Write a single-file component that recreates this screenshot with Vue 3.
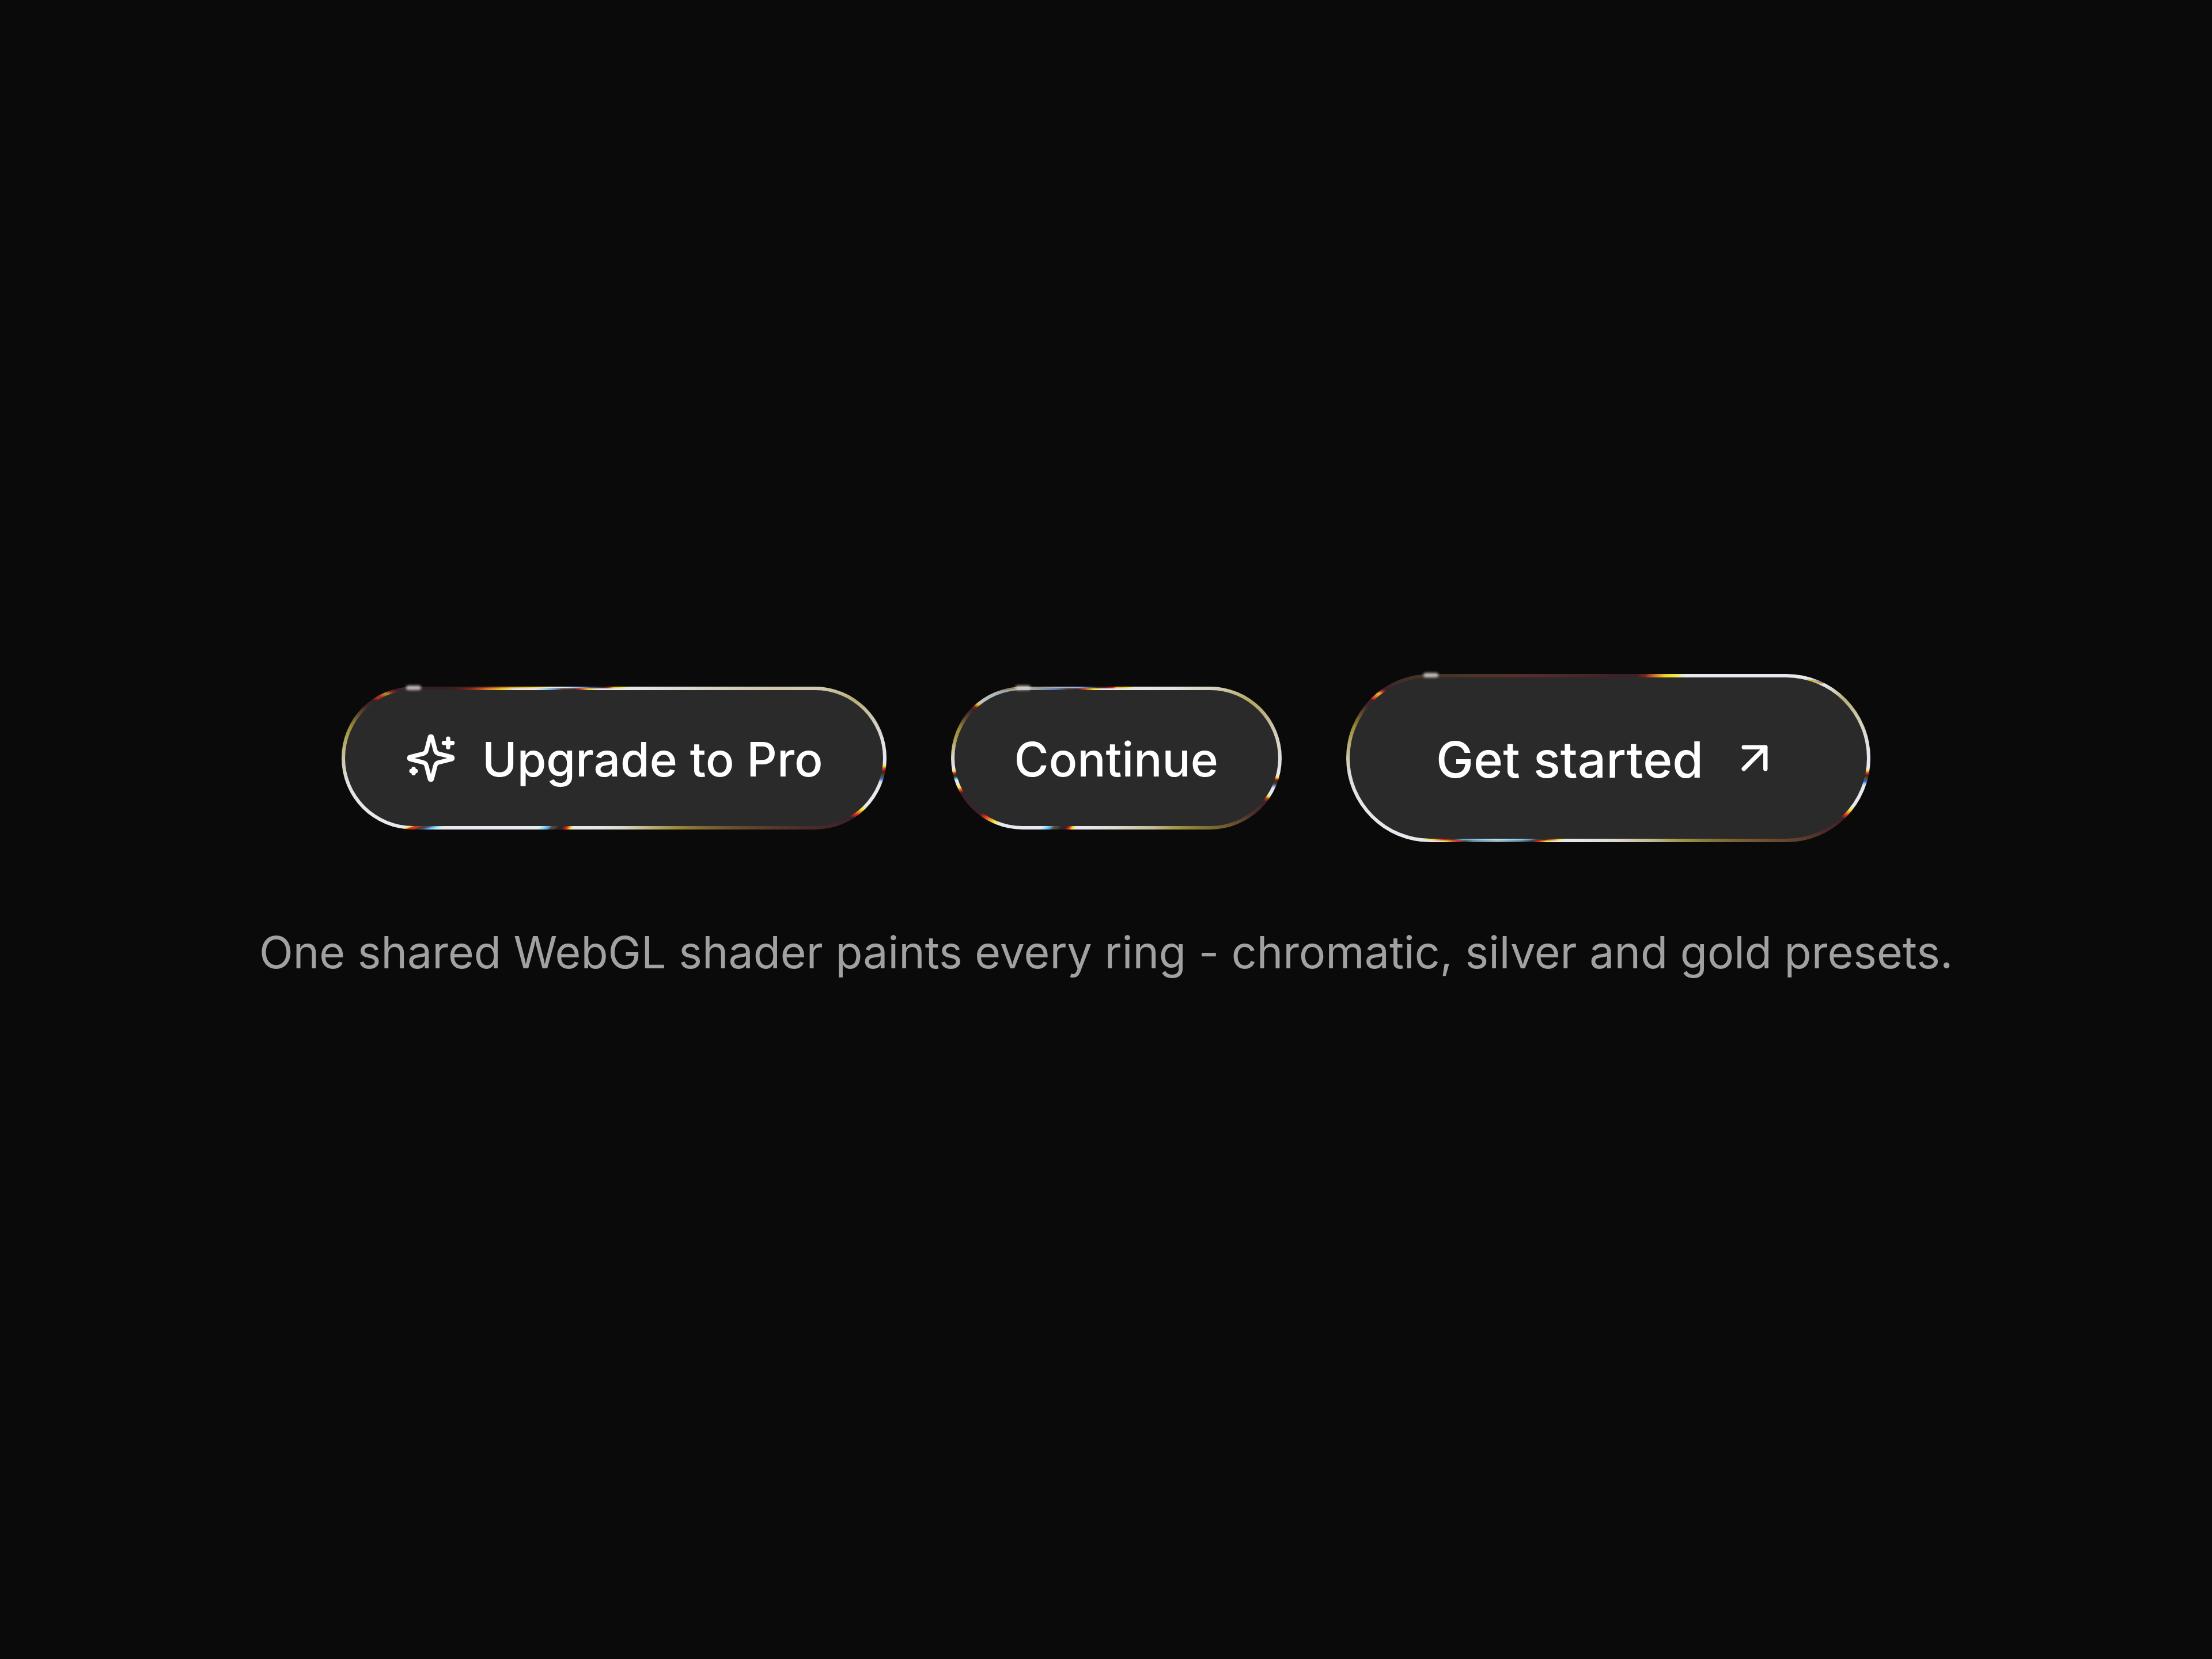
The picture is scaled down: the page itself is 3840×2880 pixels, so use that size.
<script setup>
const W = '#e9e8ee'
const YELLOW = '#eee832'
const RED = '#e02a24'
const PLUM = '#3a2228'
const OLIVE = '#9a8c38'
const MOSS = '#3a5030'
const CYAN = '#74e4ee'
const BLUE = '#6898e8'

// Ring colours are sampled as [x, y, colour] round the pill and projected on a conic sweep.
function sweep(w, h, points) {
  const stops = points
    .map(([x, y, colour]) => {
      const deg = (Math.atan2(x - w / 2, h / 2 - y) * 180) / Math.PI
      return [(deg + 360) % 360, colour]
    })
    .sort((a, b) => a[0] - b[0])
  const list = stops.map(([deg, colour]) => `${colour} ${deg.toFixed(2)}deg`)
  list.push(`${stops[0][1]} 360deg`)
  return `conic-gradient(${list.join(', ')})`
}

function ring(w, h, shared, outer, inner) {
  return {
    '--outer': sweep(w, h, [...shared, ...outer]),
    '--inner': sweep(w, h, [...shared, ...inner]),
  }
}

const upgradeRing = ring(
  945,
  248,
  [
    [150, 3, '#2f2022'], [190, 3, '#35201f'],
    [498, 3, W], [607, 3, '#dcd9d0'], [747, 3, '#cfc8ae'], [824, 3, '#d0cab2'],
    [887, 24, '#b8ae78'], [920, 58, '#cfcabb'], [938, 98, '#e4e3e6'], [942, 134, W],
    [941, 138, YELLOW], [940, 143, RED], [938, 148, PLUM], [936, 155, '#50501f'],
    [934, 160, '#5060d8'], [933, 164, '#a0d8f0'], [931, 168, W], [907, 207, W],
    [900, 213, YELLOW], [889, 221, RED], [882, 226, PLUM], [824, 245, '#4b282c'],
    [707, 245, '#64462e'], [637, 245, '#7a6434'], [582, 245, OLIVE], [527, 245, '#c0b88c'],
    [487, 245, '#dad8cc'], [450, 245, '#e4e4e6'], [402, 245, W], [397, 245, '#e8e04a'],
    [390, 245, RED], [383, 245, PLUM], [375, 245, '#38202c'], [369, 245, MOSS],
    [363, 245, '#5a4830'], [358, 245, BLUE], [350, 245, CYAN], [342, 245, W],
    [172, 245, W], [160, 245, CYAN], [153, 245, BLUE], [146, 245, '#604888'],
    [139, 245, MOSS], [134, 245, '#304a28'], [129, 245, RED], [120, 245, RED],
    [113, 245, YELLOW], [106, 245, W], [47, 216, W], [13, 168, '#e2e2e2'],
    [3, 128, '#cdc9ac'], [5, 93, '#b0a860'], [12, 70, OLIVE], [24, 51, '#6c5630'],
    [38, 33, '#432628'], [52, 23, PLUM], [59, 19, '#b82824'], [64, 17, '#b82824'],
    [75, 12, '#a89828'], [86, 9, '#8a2424'], [94, 6, PLUM], [108, 4, '#3a2830'],
  ],
  [
    [225, 3, '#4a241e'], [262, 3, '#b0501e'], [295, 3, '#e0a030'], [335, 3, '#f0d848'],
    [362, 3, '#f2efd8'], [390, 3, '#dfe6f2'], [412, 3, '#90b4e4'], [432, 3, '#4a5468'],
    [454, 3, '#3a3030'], [462, 3, '#a02a20'], [475, 3, '#e8c830'], [485, 3, YELLOW],
  ],
  [
    [210, 3, '#60241c'], [228, 3, '#b03018'], [250, 3, '#e08024'], [276, 3, '#f0d030'],
    [300, 3, W], [335, 3, W], [350, 3, '#a0d0f0'], [366, 3, '#6090d0'],
    [382, 3, '#50382a'], [404, 3, '#3a3030'], [412, 3, '#c02020'], [427, 3, '#e8d030'],
    [447, 3, W],
  ],
)

const continueRing = ring(
  574,
  248,
  [
    [140, 3, '#a8a49a'],
    [318, 3, W], [390, 3, '#e4e2de'], [455, 3, '#d6d1c0'], [480, 9, '#c8c098'],
    [520, 27, '#b4a860'], [545, 51, '#bcb488'], [561, 80, '#d2ccb6'], [571, 118, '#dedbd4'],
    [570, 154, W], [568, 158, YELLOW], [567, 161, RED], [565, 164, PLUM],
    [562, 169, '#50402c'], [560, 172, '#8090e0'], [558, 176, W], [552, 187, W],
    [549, 190, YELLOW], [546, 194, '#a83a18'], [542, 199, PLUM], [520, 220, '#522e2e'],
    [490, 237, '#68502e'], [455, 245, '#7a6a34'], [405, 245, OLIVE], [350, 245, '#c4be94'],
    [295, 245, '#dad8cc'], [250, 245, '#e4e4e4'], [217, 245, W], [211, 245, YELLOW],
    [205, 245, RED], [199, 245, PLUM], [190, 245, PLUM], [184, 245, MOSS],
    [178, 245, '#5a4830'], [172, 245, BLUE], [165, 245, CYAN], [157, 245, W],
    [115, 245, W], [86, 238, W], [75, 234, YELLOW], [60, 225, RED],
    [53, 220, PLUM], [31, 196, PLUM], [21, 184, PLUM], [18, 180, RED],
    [15, 175, YELLOW], [12, 169, W], [9, 163, W], [8, 160, '#60d0f0'],
    [7, 157, MOSS], [6, 154, PLUM], [5, 150, RED], [4, 147, YELLOW],
    [3, 143, W], [3, 118, '#d6d2bc'], [6, 92, '#a89c50'], [12, 73, OLIVE],
    [22, 54, '#5c4430'], [36, 39, PLUM], [41, 35, '#902018'], [46, 31, '#e0c030'],
    [51, 27, '#c4c4c4'],
  ],
  [
    [80, 11, '#b4b4b8'], [97, 5, '#8a8070'], [110, 3, '#a08840'],
    [155, 3, '#989898'], [190, 3, '#b0b4c0'], [222, 3, '#90b0e8'], [240, 3, '#5a6078'],
    [255, 3, '#3a3030'], [268, 3, '#601f1a'], [282, 3, RED], [296, 3, '#e8c028'],
    [308, 3, YELLOW],
  ],
  [
    [80, 11, '#98b4ba'], [110, 3, '#a0a0a4'],
    [155, 3, '#8c98a8'], [180, 3, '#5878b0'], [200, 3, '#403830'], [220, 3, '#3a2a28'],
    [232, 3, '#d04020'], [247, 3, YELLOW], [264, 3, W],
  ],
)

const startRing = ring(
  911,
  292,
  [
    [129, 3, '#443226'], [164, 3, '#443226'], [224, 3, '#503428'], [304, 3, '#562e2c'],
    [384, 3, '#4c282a'], [455, 3, '#422226'], [504, 3, PLUM], [519, 3, '#7a2418'],
    [534, 3, '#d06a24'], [554, 3, '#eed028'], [569, 3, YELLOW], [589, 3, W],
    [769, 3, W], [799, 8, W], [831, 18, W], [849, 28, '#d6d3c4'], [869, 43, '#b8ae78'],
    [889, 70, '#cdc6a8'], [903, 110, '#e0deda'], [908, 146, W], [907, 165, W],
    [906, 168, YELLOW], [905, 172, RED], [903, 176, PLUM], [901, 181, '#50501f'],
    [899, 186, '#5050d8'], [897, 190, '#90d0f8'], [895, 194, W], [883, 230, W],
    [876, 237, YELLOW], [868, 245, RED], [862, 250, PLUM], [832, 272, '#4a2a2c'],
    [787, 289, '#5e402e'], [704, 289, '#745a32'], [604, 289, '#94883a'],
    [534, 289, '#c0b88c'], [474, 289, '#dad6cc'], [424, 289, '#e2e2e4'], [380, 289, W],
    [104, 281, W], [26, 222, '#e6e6e8'], [5, 176, '#dedede'], [3, 150, '#d0ccb4'],
    [4, 115, '#b0a860'], [11, 92, OLIVE], [21, 73, '#6c5630'], [34, 55, '#43262a'],
    [43, 45, PLUM], [47, 42, RED], [52, 38, '#e87a28'], [57, 34, '#d8c028'],
    [63, 30, '#c02828'], [68, 27, PLUM], [96, 12, '#40302a'],
  ],
  [
    [806, 9, W], [815, 12, '#a8a8e0'], [824, 15, '#a88050'],
    [364, 289, W], [349, 289, YELLOW], [336, 289, RED], [324, 289, '#3a3028'],
    [304, 289, '#507888'], [264, 289, '#8cb0c0'], [224, 289, '#5c8498'],
    [209, 289, '#384030'], [194, 289, RED], [176, 289, YELLOW], [162, 289, W],
  ],
  [
    [808, 12, '#d0ae28'], [820, 17, '#e0c080'],
    [370, 289, YELLOW], [359, 289, '#e06020'], [344, 289, '#502020'], [329, 289, '#404830'],
    [319, 289, '#6090c0'], [304, 289, '#88c4dc'], [259, 289, '#bcdce8'],
    [234, 289, '#98d0e0'], [199, 289, '#6c9ccc'], [184, 289, '#5a3028'],
    [164, 289, RED], [146, 289, YELLOW], [130, 287, W],
  ],
)
</script>

<template>
  <main class="stage">
    <div class="actions">
      <button type="button" class="metal" :style="upgradeRing">
        <span class="face">
          <svg class="icon" viewBox="0 0 24 24" aria-hidden="true">
            <path
              d="M9.937 15.5A2 2 0 0 0 8.5 14.063l-6.135-1.582a.5.5 0 0 1 0-.962L8.5 9.936A2 2 0 0 0 9.937 8.5l1.582-6.135a.5.5 0 0 1 .963 0L14.063 8.5A2 2 0 0 0 15.5 9.937l6.135 1.581a.5.5 0 0 1 0 .964L15.5 14.063a2 2 0 0 0-1.437 1.437l-1.582 6.135a.5.5 0 0 1-.963 0z"
            />
            <path d="M20 3v4M22 5h-4M4 17v2M5 18H3" />
          </svg>
          <span class="label">Upgrade to Pro</span>
        </span>
      </button>
      <button type="button" class="metal" :style="continueRing">
        <span class="face"><span class="label">Continue</span></span>
      </button>
      <button type="button" class="metal large" :style="startRing">
        <span class="face">
          <span class="label">Get started</span>
          <svg class="icon" viewBox="0 0 24 24" aria-hidden="true">
            <path d="M7 7h10v10M7 17 17 7" />
          </svg>
        </span>
      </button>
    </div>
    <p class="caption">
      One shared WebGL shader paints every ring - chromatic, silver and gold presets.
    </p>
  </main>
</template>

<style>
body {
  background: #0a0a0a;
}
</style>

<style scoped>
.stage {
  box-sizing: border-box;
  min-height: 100vh;
  display: flex;
  flex-direction: column;
  align-items: center;
  justify-content: center;
  gap: 134px;
  background: #0a0a0a;
  font-family: Inter, 'Liberation Sans', sans-serif;
}

.actions {
  display: flex;
  align-items: center;
  justify-content: center;
  gap: 112px;
}

.metal {
  position: relative;
  display: flex;
  height: 248px;
  padding: 3px;
  border: 0;
  border-radius: 146px;
  background: var(--outer);
  color: #fff;
  font: 500 82px/120px Inter, 'Liberation Sans', sans-serif;
  cursor: pointer;
}

.metal::after {
  content: '';
  position: absolute;
  top: -2px;
  left: 112px;
  width: 26px;
  height: 8px;
  border-radius: 4px;
  background: rgba(225, 220, 215, 0.8);
  filter: blur(2px);
}

.metal.large {
  height: 292px;
  font-size: 87px;
}

.metal.large::after {
  left: 134px;
}

.face {
  display: flex;
  align-items: center;
  gap: 44px;
  padding: 0 104px;
  border: 3px solid transparent;
  border-radius: 146px;
  background:
    linear-gradient(#2a2a2a, #2a2a2a) padding-box,
    var(--inner) border-box;
  white-space: nowrap;
}

.large .face {
  padding: 0 150px;
}

.label {
  padding-top: 6px;
}

.icon {
  flex: none;
  width: 90px;
  height: 90px;
  fill: none;
  stroke: currentColor;
  stroke-width: 2;
  stroke-linecap: round;
  stroke-linejoin: round;
}

.caption {
  margin: 0;
  color: #a1a1a1;
  font-size: 77px;
  line-height: 114px;
}
</style>
